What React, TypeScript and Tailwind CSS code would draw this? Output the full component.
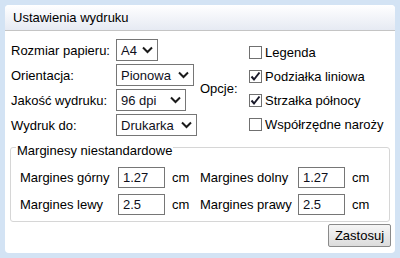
import React from "react";

const Chevron = () => (
  <svg width="11" height="8" viewBox="0 0 11 8" className="shrink-0">
    <path d="M1 1.5 L5.5 6 L10 1.5" fill="none" stroke="#1b1b1b" strokeWidth="2" />
  </svg>
);

function Select({ value, w }: { value: string; w: string }) {
  return (
    <div
      className={`${w} h-[22px] border border-[#767676] bg-white flex items-center justify-between pl-[4px] pr-[4px] text-[#10101c]`}
    >
      <span>{value}</span>
      <Chevron />
    </div>
  );
}

function Check({ checked, label }: { checked?: boolean; label: string }) {
  return (
    <div className="flex items-center h-[24px]">
      <div className="relative w-[13px] h-[13px] border border-[#707070] bg-white shrink-0">
        {checked && (
          <svg width="13" height="13" viewBox="0 0 13 13" className="absolute -left-[1px] -top-[1px]">
            <path d="M2.5 6.5 L5 9.5 L10.5 2.5" fill="none" stroke="#1a1a2a" strokeWidth="2" />
          </svg>
        )}
      </div>
      <span className="ml-[3px]">{label}</span>
    </div>
  );
}

function Input({ value }: { value: string }) {
  return (
    <div className="w-[47px] h-[21px] border border-[#767676] bg-white flex items-center pl-[4px] text-[#10101c]">
      {value}
    </div>
  );
}

export default function App() {
  return (
    <div
      className="w-[400px] h-[258px] bg-[#d3e3f4] p-[5px] text-[13px] leading-[15px] text-black"
      style={{ fontFamily: '"Liberation Sans", Arial, sans-serif' }}
    >
      <div className="w-[390px] h-[248px] bg-white rounded-[4px] flex flex-col overflow-hidden">
        <div className="h-[26px] shrink-0 bg-gradient-to-b from-[#ffffff] to-[#e6eaf3] border-b border-[#c4c4c4] flex items-center pl-[8px]">
          Ustawienia wydruku
        </div>
        <div className="flex pl-[6px] pt-[8px]">
          <div className="w-[189px] grid grid-cols-[105px_1fr] gap-y-[3px] items-center">
            <span>Rozmiar papieru:</span>
            <Select value="A4" w="w-[42px]" />
            <span>Orientacja:</span>
            <Select value="Pionowa" w="w-[78px]" />
            <span>Jakość wydruku:</span>
            <Select value="96 dpi" w="w-[70px]" />
            <span>Wydruk do:</span>
            <Select value="Drukarka" w="w-[81px]" />
          </div>
          <div className="w-[49px] flex items-center pt-[2px]">Opcje:</div>
          <div className="flex flex-col pt-[1px]">
            <Check label="Legenda" />
            <Check checked label="Podziałka liniowa" />
            <Check checked label="Strzałka północy" />
            <Check label="Współrzędne naroży" />
          </div>
        </div>
        <fieldset className="mx-[5px] mt-[1px] h-[85px] shrink-0 border border-[#d6d6d6] rounded-[3px] pl-[9px] pt-[9px]">
          <legend className="-ml-[4px] px-[1px] pt-[6px] leading-[15px]">Marginesy niestandardowe</legend>
          <div className="grid grid-cols-[98px_47px_35px_98px_47px_auto] gap-y-[6px] items-center">
            <span>Margines górny</span>
            <Input value="1.27" />
            <span className="pl-[7px]">cm</span>
            <span>Margines dolny</span>
            <Input value="1.27" />
            <span className="pl-[7px]">cm</span>
            <span>Margines lewy</span>
            <Input value="2.5" />
            <span className="pl-[7px]">cm</span>
            <span>Margines prawy</span>
            <Input value="2.5" />
            <span className="pl-[7px]">cm</span>
          </div>
        </fieldset>
        <div className="flex justify-end pr-[4px] pt-[2px]">
          <button className="w-[63px] h-[23px] border border-[#8a8a8a] rounded-[2px] bg-gradient-to-b from-[#f6f6f6] to-[#dcdcdc] text-black leading-[15px]">
            Zastosuj
          </button>
        </div>
      </div>
    </div>
  );
}
